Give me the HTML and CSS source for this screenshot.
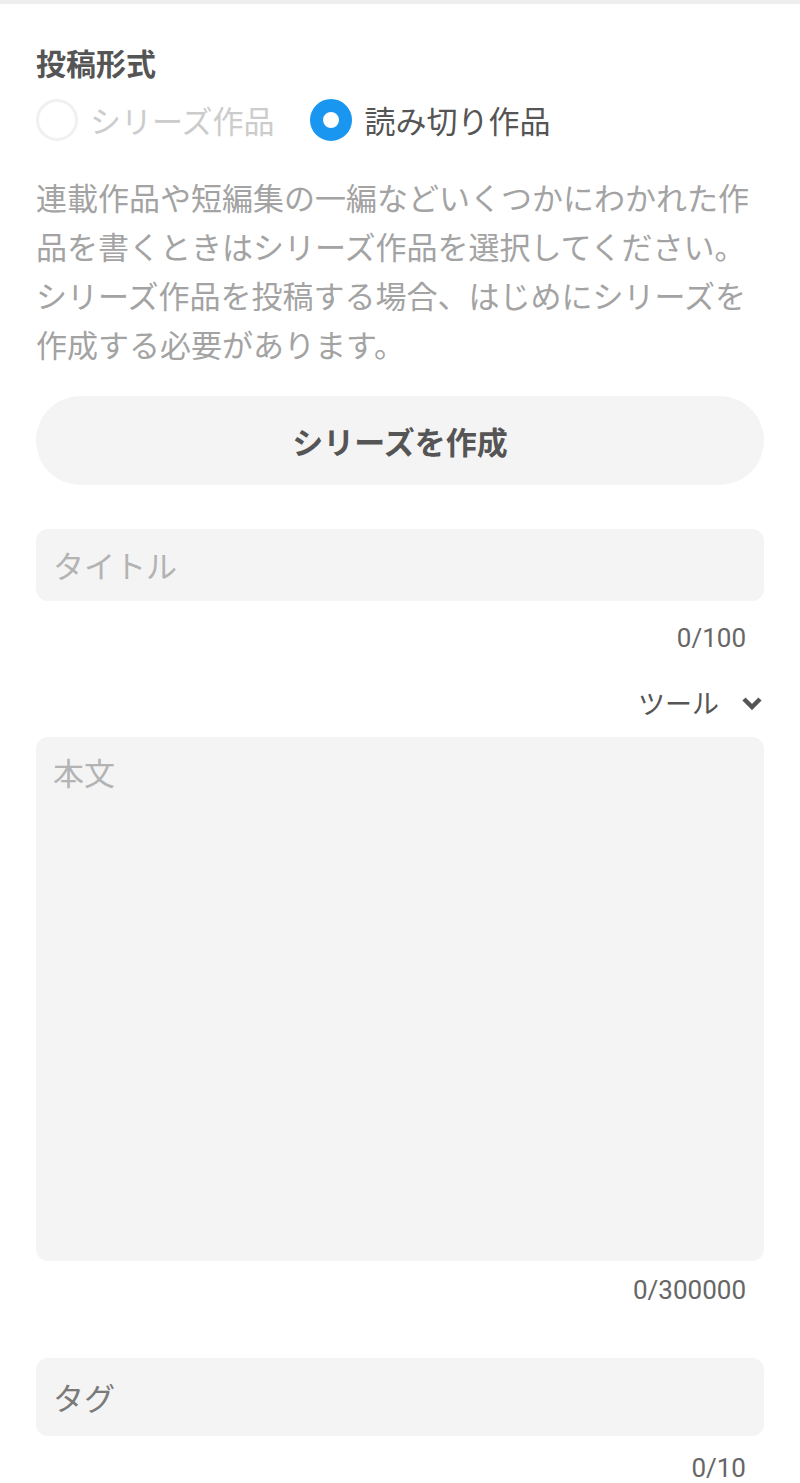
FILE: index.html
```html
<!DOCTYPE html>
<html lang="ja">
<head>
<meta charset="utf-8">
<title>投稿形式</title>
<link rel="stylesheet" href="styles.css">
</head>
<body>
<main class="page">
  <h2 class="heading">投稿形式</h2>
  <div class="radio-row">
    <label class="radio">
      <span class="radio-mark"></span>
      <span class="radio-label">シリーズ作品</span>
    </label>
    <label class="radio radio-checked">
      <span class="radio-mark"></span>
      <span class="radio-label">読み切り作品</span>
    </label>
  </div>
  <p class="desc">連載作品や短編集の一編などいくつかにわかれた作品を書くときはシリーズ作品を選択してください。シリーズ作品を投稿する場合、はじめにシリーズを作成する必要があります。</p>
  <div class="pill-button">シリーズを作成</div>
  <div class="field field-title"><span class="placeholder">タイトル</span></div>
  <div class="counter counter-title">0/100</div>
  <div class="tools">
    <span class="tools-label">ツール</span>
    <svg class="chevron" width="22" height="14" viewBox="0 0 22 14"><path d="M3 3 L11 11 L19 3" fill="none" stroke="#555" stroke-width="4.5" stroke-linejoin="miter"/></svg>
  </div>
  <div class="field field-body"><span class="placeholder">本文</span></div>
  <div class="counter counter-body">0/300000</div>
  <div class="field field-tag"><span class="placeholder placeholder-dark">タグ</span></div>
  <div class="counter counter-tag">0/10</div>
</main>
</body>
</html>
```
FILE: styles.css
```css
html, body {
  margin: 0;
  padding: 0;
  background: #ffffff;
}
body {
  border-top: 4px solid #eeeeee;
  font-family: "Noto Sans CJK JP", "Noto Sans", sans-serif;
  color: #555555;
}
.page {
  padding: 0 36px;
  display: flex;
  flex-direction: column;
}
.heading {
  margin: 38px 0 0;
  font-size: 30px;
  line-height: 40px;
  font-weight: 700;
  color: #555555;
}
.radio-row {
  margin-top: 16px;
  display: flex;
  align-items: center;
  height: 44px;
  gap: 36px;
}
.radio {
  display: flex;
  align-items: center;
  gap: 12px;
}
.radio-mark {
  box-sizing: border-box;
  width: 42px;
  height: 42px;
  border-radius: 50%;
  border: 3px solid #f0f0f0;
  background: #ffffff;
}
.radio-checked .radio-mark {
  border: 13px solid #1996f0;
  background: #ffffff;
}
.radio-label {
  font-size: 31px;
  line-height: 44px;
  color: #cccccc;
}
.radio-checked .radio-label {
  color: #555555;
}
.desc {
  margin: 30px 0 0;
  font-size: 31px;
  line-height: 49px;
  color: #a3a3a3;
}
.pill-button {
  margin-top: 28px;
  height: 89px;
  border-radius: 45px;
  background: #f4f4f4;
  display: flex;
  align-items: center;
  justify-content: center;
  font-size: 31px;
  font-weight: 700;
  color: #555555;
}
.field {
  background: #f4f4f4;
  border-radius: 12px;
  padding: 0 17px;
  display: flex;
}
.field-title {
  margin-top: 44px;
  height: 72px;
  align-items: center;
}
.field-body {
  margin-top: 16px;
  height: 524px;
  align-items: flex-start;
  padding-top: 16px;
  box-sizing: border-box;
}
.field-tag {
  margin-top: 50px;
  height: 78px;
  align-items: center;
}
.placeholder {
  font-size: 31px;
  line-height: 38px;
  color: #b3b3b3;
}
.placeholder-dark {
  color: #7a7a7a;
}
.counter {
  text-align: right;
  padding-right: 18px;
  font-family: Roboto, "Noto Sans", sans-serif;
  font-size: 26px;
  line-height: 36px;
  color: #666666;
}
.counter-title { margin-top: 19px; }
.counter-body { margin-top: 11px; }
.counter-tag { margin-top: 14px; }
.tools {
  margin-top: 29px;
  height: 36px;
  display: flex;
  align-items: center;
  justify-content: flex-end;
  gap: 22px;
}
.tools-label {
  font-size: 27px;
  line-height: 36px;
  color: #555555;
}
.chevron {
  display: block;
  margin-right: 1px;
}
```
